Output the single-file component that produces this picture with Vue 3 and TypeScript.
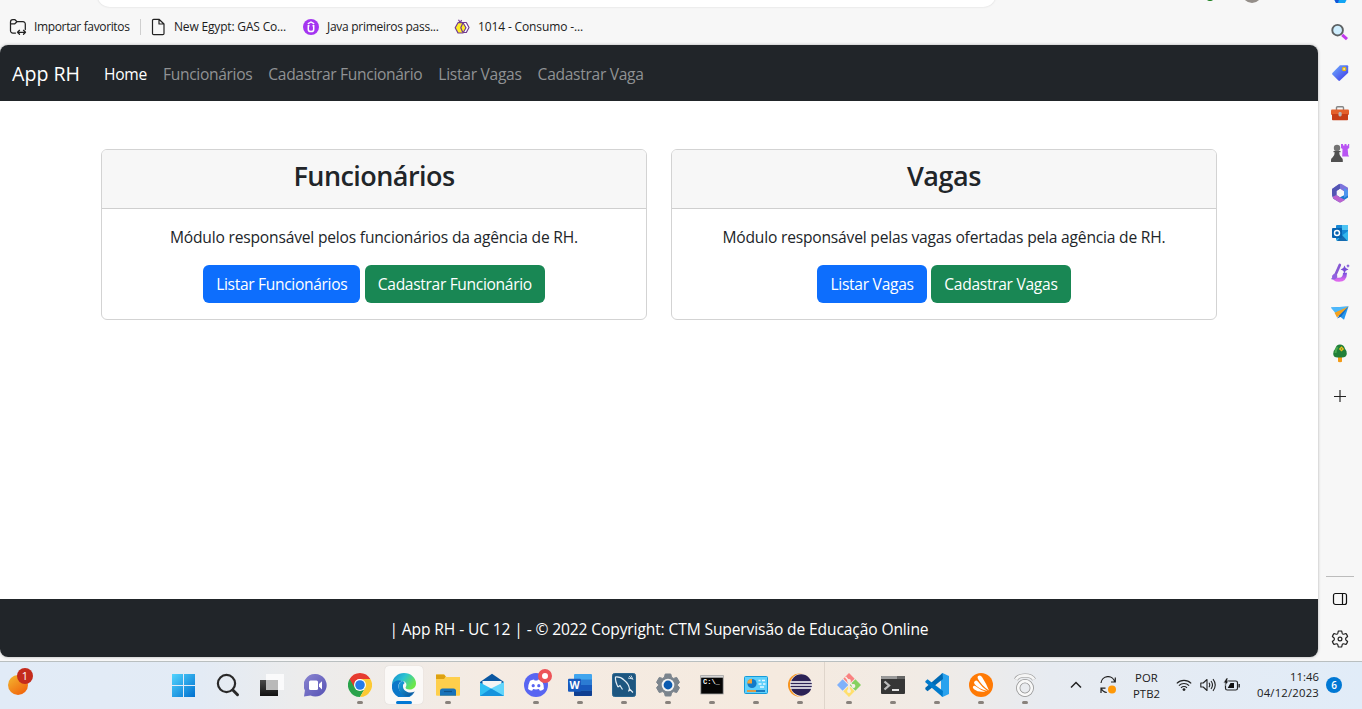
<script setup lang="ts">
interface NavLink { label: string; width: number; active?: boolean }
interface Action { label: string; width: number; kind: 'primary' | 'success' }
interface ModuleCard { title: string; titleWidth: number; text: string; textWidth: number; actions: Action[] }

const links: NavLink[] = [
  { label: 'Home', width: 43, active: true },
  { label: 'Funcionários', width: 89.3 },
  { label: 'Cadastrar Funcionário', width: 154 },
  { label: 'Listar Vagas', width: 83.3 },
  { label: 'Cadastrar Vaga', width: 106 },
]

const cards: ModuleCard[] = [
  {
    title: 'Funcionários',
    titleWidth: 161,
    text: 'Módulo responsável pelos funcionários da agência de RH.',
    textWidth: 408,
    actions: [
      { label: 'Listar Funcionários', width: 131.2, kind: 'primary' },
      { label: 'Cadastrar Funcionário', width: 154, kind: 'success' },
    ],
  },
  {
    title: 'Vagas',
    titleWidth: 74,
    text: 'Módulo responsável pelas vagas ofertadas pela agência de RH.',
    textWidth: 443,
    actions: [
      { label: 'Listar Vagas', width: 83.3, kind: 'primary' },
      { label: 'Cadastrar Vagas', width: 113.3, kind: 'success' },
    ],
  },
]

// Spreads the letters of a label so that it spans the given width.
const vFit = {
  mounted(el: HTMLElement, binding: { value: number }) {
    const natural = el.getBoundingClientRect().width
    const count = (el.textContent ?? '').length
    if (count > 0) el.style.letterSpacing = `${(binding.value - natural) / count}px`
  },
}
</script>

<template>
  <div class="screen">
    <div class="browser">
      <div class="main">
        <div class="address">
          <div class="omnibox"></div>
          <span class="ext"></span>
          <span class="avatar"></span>
        </div>
        <div class="bookmarks">
          <div class="bm import">
            <svg width="18" height="18" viewBox="0 0 18 18" fill="none" stroke="#222" stroke-width="1.25" stroke-linecap="round" stroke-linejoin="round">
              <path d="M6.5 15H3.8A2.3 2.3 0 0 1 1.500 12.700V4A2.300 2.300 0 0 1 3.800 1.700H6l2 2h6A2.300 2.300 0 0 1 16.300 6v5.500M1.500 5.800h4.300L8 3.700" />
              <path d="M8.500 14.300h8M10.500 12.300l-2 2 2 2M14.500 12.300l2 2-2 2" />
            </svg>
            <span v-fit="95.500" class="t">Importar favoritos</span>
          </div>
          <span class="bm-sep"></span>
          <div class="bm page">
            <svg width="14" height="18" viewBox="0 0 14 18" fill="none" stroke="#222" stroke-width="1.200" stroke-linejoin="round">
              <path d="M1.500 2.500A1.200 1.200 0 0 1 2.700 1.300H8L13 6v9.500a1.200 1.200 0 0 1-1.200 1.200H2.700A1.200 1.200 0 0 1 1.500 15.500zM8 1.500V6h4.800" />
            </svg>
            <span v-fit="112" class="t">New Egypt: GAS Co...</span>
          </div>
          <div class="bm java">
            <svg width="16" height="16" viewBox="0 0 16 16">
              <circle cx="8" cy="8" r="8" fill="#a435f0" />
              <path d="M4.800 4.900 8 3l3.200 1.900" fill="none" stroke="#fff" stroke-width="1.300" />
              <path d="M4.600 6.800h1.900M9.500 6.800h1.200v3.600q0 2.100-2.700 2.100t-2.700-2.100V6.800" fill="none" stroke="#fff" stroke-width="1.500" />
            </svg>
            <span v-fit="111.500" class="t">Java primeiros pass...</span>
          </div>
          <div class="bm bee">
            <svg width="16" height="16" viewBox="0 0 16 16" stroke="#713a92" stroke-width="1.200" stroke-linejoin="round">
              <path d="M9 3.500h3.300L15 8.500l-2.700 5H8.500" fill="#fff" />
              <path d="M4 3.700h5L12 8.700l-3 5.300H4L1.200 8.700z" fill="#ffee27" />
              <path d="M8.800 4 6.800 8.700l2 4.800M4.500.8 6 3.300M7.500 1 6.500 3.500" fill="none" />
            </svg>
            <span v-fit="105" class="t">1014 - Consumo -...</span>
          </div>
        </div>

        <div class="page-frame">
          <nav class="navbar">
            <span v-fit="68" class="brand">App RH</span>
            <a v-for="link in links" :key="link.label" :class="['nav-link', { active: link.active }]">
              <span v-fit="link.width" class="t">{{ link.label }}</span>
            </a>
          </nav>
          <main class="content">
            <section v-for="card in cards" :key="card.title" class="card">
              <header class="card-header">
                <h2><span v-fit="card.titleWidth" class="t">{{ card.title }}</span></h2>
              </header>
              <div class="card-body">
                <p><span v-fit="card.textWidth" class="t">{{ card.text }}</span></p>
                <div class="actions">
                  <button v-for="a in card.actions" :key="a.label" :class="['btn', a.kind]">
                    <span v-fit="a.width" class="t">{{ a.label }}</span>
                  </button>
                </div>
              </div>
            </section>
          </main>
          <footer class="footer">
            <span v-fit="539" class="t">| App RH - UC 12 | - © 2022 Copyright: CTM Supervisão de Educação Online</span>
          </footer>
        </div>
      </div>

      <aside class="sidebar">
        <div class="slot">
          <svg width="20" height="20" viewBox="0 0 20 20"><path d="M4 10h16l-2 4-3 6H6l-2-4z" fill="#12a5f4" /><path d="M4 10h7l-3 10H6l-2-4z" fill="#1455d8" /></svg>
        </div>
        <div class="slot">
          <svg width="20" height="20" viewBox="0 0 20 20">
            <path d="m12.200 11.800 4.800 4.400" stroke="#c239ee" stroke-width="3" />
            <circle cx="7.600" cy="7.200" r="5.300" fill="#cfeefe" stroke="#5c6062" stroke-width="1.900" />
          </svg>
        </div>
        <div class="slot">
          <svg width="20" height="20" viewBox="0 0 20 20">
            <defs><linearGradient id="tag" x1="0" y1="0" x2="1" y2="1"><stop offset="0" stop-color="#72b3ff" /><stop offset="1" stop-color="#3b32e5" /></linearGradient></defs>
            <path d="M10 2.200h7.200q1 0 1 1v6.600L10 17.600q-.8.700-1.600 0L2.400 11.500q-.7-.8 0-1.600z" fill="url(#tag)" />
            <circle cx="14.200" cy="6" r="1.700" fill="#e8ddc0" stroke="#e3b80b" stroke-width="1.200" />
          </svg>
        </div>
        <div class="slot">
          <svg width="20" height="20" viewBox="0 0 20 20">
            <path d="M6.500 7V4.800q0-1 1-1h5q1 0 1 1V7" fill="none" stroke="#858585" stroke-width="1.400" />
            <rect x="1" y="6.500" width="18" height="5.500" rx="1" fill="#e4602b" />
            <path d="M2 11h16v5.500q0 .8-.8.800H2.800q-.8 0-.8-.800z" fill="#c63e17" />
            <rect x="8.500" y="9" width="3.200" height="4.500" rx="1.400" fill="#b9b9b9" />
          </svg>
        </div>
        <div class="slot">
          <svg width="20" height="20" viewBox="0 0 20 20">
            <path d="M11 1h2v1.500h1.500V1h2v1.500H18V1h1.200v4l-1.500 1 .5 6 1 1.500h-7L12.500 6 11 5z" fill="#b955f3" />
            <circle cx="7" cy="5" r="3.200" fill="#737373" />
            <path d="M3.500 8h7v1.300H9.200q0 3.200 2 5 1.600 1 1.600 2.500V19H1v-2.200q0-1.500 1.700-2.500 2-1.800 2-5H3.500z" fill="#505050" />
          </svg>
        </div>
        <div class="slot">
          <svg width="20" height="20" viewBox="0 0 20 20">
            <path d="M9 1q2-.8 4 .8l5 3v6l-5-3-3-2-3.500 2.200v5L2 11V6z" fill="#7d74dc" />
            <path d="M2 6 8.500 1.500Q10 .7 10 2v3.800L6.500 8v5L3 15q-1.300-1.500-1-4z" fill="#5355b3" />
            <path d="M3 13.500 6.500 12l3.500 2.300 4-2.100V8l4 2v4.500L11 19q-1 .5-2 0L3 15.600z" fill="#1b79d0" />
            <path d="M3 13.500 6.500 12l3.500 2.300L15 17l-4 2.200q-1 .4-2 0l-6-3.700z" fill="#bb63cf" />
            <path d="m14 5 4 2.500v5L14 15z" fill="#4e95ee" /><path d="m10 6.300 3.500 2v3.600L10 13.800l-3-2V8.200z" fill="#f7f7f7" />
          </svg>
        </div>
        <div class="slot">
          <svg width="20" height="20" viewBox="0 0 20 20">
            <rect x="6" y="2" width="12" height="15" rx="1" fill="#1688d5" /><path d="M12 2h6v5h-6z" fill="#4ec4f3" /><path d="m6 17 12-9v9.300q0 .7-.8.700H7z" fill="#34b7ee" /><path d="M7 18h10.500L12 12z" fill="#156bb0" />
            <rect x="2" y="5" width="10" height="10" rx="1" fill="#0763b0" /><circle cx="7" cy="10" r="2.500" fill="none" stroke="#fff" stroke-width="1.400" />
          </svg>
        </div>
        <div class="slot">
          <svg width="20" height="20" viewBox="0 0 20 20">
            <defs><linearGradient id="brush" x1="0" y1="0" x2="0" y2="1"><stop offset="0" stop-color="#7450dd" /><stop offset="1" stop-color="#dc68ed" /></linearGradient></defs>
            <path d="M4 12.500q0 4.300 5 4.300 6 0 6-7" fill="none" stroke="url(#brush)" stroke-width="4" />
            <path d="M9.800 2 5.800 11" stroke="#8758d4" stroke-width="2.700" stroke-linecap="round" />
            <path d="M5.500 10.500q3 2 1 4.500Q4.500 17.500 1 16q1.500-1 1.500-3.200 1-2.500 3-2.300" fill="#9062df" />
            <path d="m14.500 2.500 1.200 2.600L18.500 6.500l-2.800 1.300L14.500 10.500l-1.200-2.700L10.600 6.500l2.700-1.400zM18 1l.6 1.300 1.300.6-1.300.6L18 4.900l-.6-1.400-1.300-.6 1.300-.6z" fill="#774bd5" />
          </svg>
        </div>
        <div class="slot">
          <svg width="20" height="20" viewBox="0 0 20 20">
            <path d="M1 4.500 18.500 3.500 14 16.800 7.500 11.500z" fill="#2497ef" /><path d="m18.500 3.500-12 8L1 4.500z" fill="#4cb8fb" /><path d="m18.500 3.500-14 6.200L7 14.500l2.500-2.300z" fill="#f2a220" /><path d="m18.500 3.500-9 8.700L7 15.500l4-1.700z" fill="#1a69bd" />
          </svg>
        </div>
        <div class="slot">
          <svg width="20" height="20" viewBox="0 0 20 20">
            <path d="M8 12.500h4v6q0 .8-2 .8t-2-.8z" fill="#f39b18" /><path d="M10 1.500q3.700 0 5 4.200 2.200 2.200 1.800 5.300Q16.200 14.500 12 14.500H7.500q-4 0-4.300-3.500-.2-3 2-5.200Q6.300 1.500 10 1.500" fill="#218039" /><path d="M7.500 4Q5.500 7 5.500 10" stroke="#47a84f" stroke-width="2" fill="none" />
            <path d="m11.500 3.300 2.600 2.600-2.600 2.600-2.600-2.600z" fill="#f0bd1b" /><circle cx="11.500" cy="5.900" r=".7" fill="#368538" />
          </svg>
        </div>
        <div class="slot plus">
          <svg width="14" height="14" viewBox="0 0 14 14"><path d="M7 1v12M1 7.500h12" stroke="#222" stroke-width="1.150" /></svg>
        </div>
        <div class="side-bottom">
          <span class="side-rule"></span>
          <svg class="panel" width="16" height="14" viewBox="0 0 16 14" fill="none" stroke="#111" stroke-width="1.200"><rect x="1.500" y="1.500" width="13" height="11" rx="2" /><path d="M10.500 1.500v11" /></svg>
          <svg class="gear" width="18" height="18" viewBox="0 0 18 18" fill="none" stroke="#222" stroke-width="1.200" stroke-linejoin="round">
            <path d="M7.300 1.200q1.700-.4 3.400 0l.5 2.200q.4 1 1.500.8l2.200-.7q1.200 1.300 1.700 3L14.900 8q-.7 1 0 2l1.700 1.500q-.5 1.700-1.700 3l-2.200-.7q-1.100-.2-1.500.8l-.5 2.200q-1.700.4-3.400 0l-.5-2.200q-.4-1-1.500-.8l-2.200.7q-1.200-1.300-1.700-3L3.100 10q.7-1 0-2L1.400 6.500q.5-1.700 1.700-3l2.200.7q1.100.2 1.500-.8z" /><circle cx="9" cy="9" r="1.900" />
          </svg>
        </div>
      </aside>
    </div>

    <div class="taskbar">
      <div class="widget">
        <svg width="28" height="32" viewBox="0 0 28 32">
          <defs><linearGradient id="sun" x1="0" y1="0" x2=".7" y2="1"><stop offset="0" stop-color="#f3bb32" /><stop offset="1" stop-color="#f1650c" /></linearGradient></defs>
          <circle cx="11" cy="20" r="10" fill="url(#sun)" /><circle cx="18" cy="11" r="8" fill="#c42b1c" />
        </svg>
        <span class="count">1</span>
      </div>

      <div class="apps">
        <div class="app">
          <svg width="24" height="24" viewBox="0 0 24 24">
            <defs><linearGradient id="win" x1="0" y1="0" x2="1" y2="1"><stop offset="0" stop-color="#52d4fe" /><stop offset="1" stop-color="#0070cf" /></linearGradient></defs>
            <path d="M0 1h11v11H0zM12 1h11v11H12zM0 13h11v11H0zM12 13h11v11H12z" fill="url(#win)" />
          </svg>
        </div>
        <div class="app">
          <svg width="24" height="24" viewBox="0 0 24 24" fill="none" stroke="#292929"><circle cx="10.500" cy="10.500" r="8.600" stroke-width="2.200" /><path d="m16.800 17 4.700 4.700" stroke-width="3" stroke-linecap="round" /></svg>
        </div>
        <div class="app">
          <svg width="26" height="24" viewBox="0 0 26 24">
            <defs><linearGradient id="tv" x1="0" y1="0" x2="0" y2="1"><stop offset="0" stop-color="#484848" /><stop offset="1" stop-color="#111" /></linearGradient></defs>
            <path d="M1 7h18v16H1z" fill="url(#tv)" /><path d="M7 1h18v16H7z" fill="#fff" opacity=".75" /><path d="M7 7h12v10H7z" fill="#b9b9b9" />
          </svg>
        </div>
        <div class="app">
          <svg width="24" height="24" viewBox="0 0 24 24">
            <defs><linearGradient id="chat" x1="0" y1="0" x2="1" y2="1"><stop offset="0" stop-color="#8b86d1" /><stop offset="1" stop-color="#5551b4" /></linearGradient></defs>
            <path d="M11.500 1a11.300 11.300 0 1 1-5 21.500L0 23.500l.9-6A11.300 11.300 0 0 1 11.500 1" fill="url(#chat)" />
            <rect x="5" y="7.500" width="9" height="9.500" rx="1.500" fill="#fff" /><path d="m15 11 3-2.800v8.200l-3-2.800z" fill="#fff" />
          </svg>
        </div>
        <div class="app open">
          <svg width="24" height="24" viewBox="0 0 24 24">
            <circle cx="12" cy="12" r="12" fill="#fff" />
            <path d="M12 12 1.600 6A12 12 0 0 0 12 24l5.200-9z" fill="#2aa34b" /><path d="M12 6h10.400A12 12 0 0 1 12 24l5.200-9z" fill="#fcc934" /><path d="M12 0A12 12 0 0 1 22.400 6H12a6 6 0 0 0-5.200 9L1.600 6A12 12 0 0 1 12 0" fill="#e63b30" />
            <circle cx="12" cy="12" r="6" fill="#fff" /><circle cx="12" cy="12" r="4.800" fill="#267be9" />
          </svg>
        </div>
        <div class="app open current">
          <svg width="24" height="24" viewBox="0 0 24 24">
            <defs>
              <linearGradient id="edgeTop" x1="0" y1="0" x2="1" y2=".5"><stop offset="0" stop-color="#1689cf" /><stop offset=".5" stop-color="#2bc3d2" /><stop offset="1" stop-color="#6be64a" /></linearGradient>
              <linearGradient id="edgeLow" x1="0" y1="0" x2="1" y2="1"><stop offset="0" stop-color="#1ba6e4" /><stop offset="1" stop-color="#0b4d91" /></linearGradient>
            </defs>
            <path d="M0 11.500C.5 4.500 5.700 0 12 0c7 0 12 5 12 10.200 0 4-3 6.300-6.500 6.300-3 0-4.500-1.200-3.800-2.300 1.500-2.300.8-5.500-3-6.200C6 7 2 8.500 0 11.500" fill="url(#edgeTop)" />
            <path d="M0 11.500C2 7.500 7 6.500 10.500 8 7.500 8.500 6 11.500 6.500 14.500c.7 4.500 5 7.500 9 7.500 3 0 5.500-1.500 7.200-3.500A12 12 0 0 1 0 11.500" fill="#0b78c9" />
            <path d="M10.500 8C7 9 5.700 13 7.200 17c1.500 4 5 6.700 8.500 6.300 3-.6 5.300-2.300 7-4.800-5.500 2.700-12.500-.5-11.700-6.300.2-1 .9-1.700 1.600-2-.2-1-.9-1.800-2.100-2.200" fill="url(#edgeLow)" />
          </svg>
        </div>
        <div class="app open">
          <svg width="24" height="24" viewBox="0 0 24 24">
            <path d="M0 2.300Q0 1.500 1 1.500h7l2.500 2.500H23q1 0 1 1v17H0z" fill="#ffd45b" /><path d="M0 1.500h8.200l1.500 2L8.200 6H0z" fill="#dda111" /><path d="M0 6h8.500L10.500 4H24v18q0 .7-1 .7H1q-1 0-1-.700z" fill="#fecf4c" /><path d="M4 22.700V18q0-2.500 2.500-2.500h11Q20 15.500 20 18v4.700z" fill="#1772b9" /><path d="M8 18.500h8" stroke="#0d528a" stroke-width="1.200" />
          </svg>
        </div>
        <div class="app">
          <svg width="24" height="24" viewBox="0 0 24 24">
            <path d="M0 9 12 .8 24 9v14H0z" fill="#0b57a1" /><path d="M2.500 8h19v10h-19z" fill="#f4f4f4" /><path d="M0 9.500 12 16l12-6.500V23H0z" fill="#31bff3" /><path d="m24 23-13-7.500L24 9z" fill="#62d5fb" /><path d="m0 23 11-7.500L24 23z" fill="#1593dd" />
          </svg>
        </div>
        <div class="app open discord">
          <svg width="24" height="24" viewBox="0 0 24 24">
            <circle cx="12" cy="12" r="12" fill="#5865f2" /><path d="M6 7.700Q8 6.500 10 6.400l.6 1.200q1.400-.2 2.800 0l.6-1.200q2 .1 4 1.300 2 4 1.900 8.300-1.700 1.400-4 1.800l-1-1.700q-2.900.7-5.800 0l-1 1.700q-2.300-.4-4-1.800Q4 11.700 6 7.700" fill="#fff" /><circle cx="9.200" cy="12.700" r="1.600" fill="#5865f2" /><circle cx="14.800" cy="12.700" r="1.600" fill="#5865f2" />
          </svg>
          <span class="dot"></span>
        </div>
        <div class="app open">
          <div class="word">
            <svg width="24" height="24" viewBox="0 0 24 24"><rect x="6" y="1" width="18" height="22" rx="1" fill="#41a5ee" /><path d="M6 6.500h18V12H6z" fill="#2b7cd3" /><path d="M6 12h18v5.500H6z" fill="#185abd" /><path d="M6 17.500h18V22q0 1-1 1H7q-1 0-1-1z" fill="#103f91" /><rect y="5.800" width="13" height="13" rx="1" fill="#185abd" /></svg>
            <span>W</span>
          </div>
        </div>
        <div class="app open">
          <svg width="24" height="24" viewBox="0 0 24 24">
            <rect x=".5" y=".5" width="23" height="23" rx="2" fill="#1d5680" stroke="#2b6790" />
            <path d="M6 14Q3 8 3.500 4q5-.5 8.500 3 5 4 5.500 9l3.500 3.500M6 14l2-1.500 2.500 4M17.500 16l-1 2.500" fill="none" stroke="#e3edf4" stroke-width="1.200" /><path d="m17 3 3 3M19 2.500l2 4M16 5l5 1" stroke="#c5d6e2" stroke-width="1" />
          </svg>
        </div>
        <div class="app open">
          <svg width="24" height="24" viewBox="0 0 24 24">
            <path d="M9.200 1h5.600l.8 3.300 1.900 1.100 3.200-1 2.800 4.900L21.200 12l2.300 2.700-2.800 4.900-3.200-1-1.900 1.100-.8 3.300H9.200l-.8-3.300-1.900-1.100-3.200 1L.5 14.700 2.800 12 .5 9.300l2.800-4.900 3.200 1 1.900-1.100z" fill="#7b848d" stroke="#7b848d" stroke-linejoin="round" /><circle cx="12" cy="12" r="6.300" fill="#f2f2f2" /><circle cx="12" cy="12" r="4.400" fill="#0b5ab0" />
          </svg>
        </div>
        <div class="app open">
          <div class="cmd">
            <svg width="24" height="24" viewBox="0 0 24 24"><rect x=".8" y="2.500" width="22.400" height="18.500" fill="#050505" stroke="#aaa" stroke-width=".8" /><path d="M1 2.700h22v2H1z" fill="#d5d5d5" /></svg>
            <span>C:\_</span>
          </div>
        </div>
        <div class="app open">
          <svg width="24" height="24" viewBox="0 0 24 24">
            <rect x=".5" y="3.500" width="23" height="17" rx="1" fill="#60d0fb" stroke="#159bd9" /><circle cx="8" cy="10.500" r="4.600" fill="#137ac8" /><path d="M8 10.500V5.700a4.800 4.800 0 0 0-4.800 4.800z" fill="#f8a333" /><path d="M14.500 7.500h2M18 7.500h3M14.500 11h3M19 11h2.500M16 14h4" stroke="#e8f8ff" stroke-width="1.500" /><path d="M3 18h9" stroke="#f09329" stroke-width="1.700" /><path d="M12 18h9" stroke="#0d6db4" stroke-width="1.700" />
          </svg>
        </div>
        <div class="app open">
          <svg width="24" height="24" viewBox="0 0 24 24"><circle cx="11.500" cy="12" r="11.500" fill="#f7941e" /><circle cx="13.500" cy="12" r="11.500" fill="#f5eadf" /><circle cx="13.200" cy="12" r="10.700" fill="#2c2255" /><path d="M2.500 9h21.500M2 12h22M2.500 15h21.500" stroke="#fff" stroke-width="1.400" /></svg>
        </div>
        <span class="task-sep"></span>
        <div class="app open">
          <svg width="24" height="24" viewBox="0 0 24 24">
            <g transform="rotate(45 12 12)"><path d="M3.500 3.500h8v8h-8z" fill="#f98280" /><path d="M12.500 3.500h8v8h-8z" fill="#85d15f" /><path d="M3.500 12.500h8v8h-8z" fill="#80b1fa" /><path d="M12.500 12.500h8v8h-8z" fill="#ffdf6d" /></g>
            <path d="m8.500 4 3.500 4v10M12 9l4.500 4" stroke="#f5efe7" stroke-width="1.600" fill="none" /><circle cx="12" cy="8" r="1.900" fill="#f5efe7" /><circle cx="12" cy="18" r="1.900" fill="#f5efe7" /><circle cx="16.500" cy="13" r="1.900" fill="#f5efe7" />
          </svg>
        </div>
        <div class="app open">
          <svg width="24" height="24" viewBox="0 0 24 24"><rect y="3" width="24" height="18" rx="1" fill="#363636" /><path d="M0 4q0-1 1-1h15v3H0z" fill="#9a9a9a" /><path d="M16 3h7q1 0 1 1v2h-8z" fill="#666" /><path d="m3.500 8.500 4.500 4-4.500 4" fill="none" stroke="#bbb" stroke-width="2.300" /><path d="M11 17h7" stroke="#eee" stroke-width="1.900" /></svg>
        </div>
        <div class="app open">
          <svg width="24" height="24" viewBox="0 0 24 24"><path d="M17.500 0 24 3v18l-6.500 3-1.500-1.500v-21z" fill="#29a2ee" /><path d="M17.500 0 18 6 2.500 18.200.3 16.200v-1.400z" fill="#0069b3" /><path d="m.3 8.200 2.200-2L18 18l-.5 6L.3 9.300z" fill="#007acc" /></svg>
        </div>
        <div class="app open">
          <svg width="24" height="24" viewBox="0 0 24 24"><circle cx="12" cy="12" r="12" fill="#ff7a05" /><path d="M9 3q2.500-1.500 4 1 4.500 7 7 13.500-7-4.500-11-11.500-1-2 0-3M6 8q1.500-1 2.800.5 4 5.500 9.700 9.500Q9.500 16 5.500 11 4.300 9 6 8M4.500 13q1.200-.7 2.500.5 4.500 3.700 9.500 5-7.500 1-11.500-2.300-2-2-.5-3.200" fill="#fff" /></svg>
        </div>
        <div class="app open">
          <svg width="24" height="24" viewBox="0 0 24 24" fill="none"><path d="M3 6.500Q5 2.500 12 2.500t9 4" stroke="#989898" stroke-width="4.200" /><path d="M3 6.500Q5 2.500 12 2.500t9 4" stroke="#f5f5f5" stroke-width="2.800" /><circle cx="12" cy="15" r="6.800" stroke="#909090" stroke-width="4.200" /><circle cx="12" cy="15" r="6.800" stroke="#f8f8f8" stroke-width="2.700" /></svg>
        </div>
      </div>

      <div class="tray">
        <svg class="chevron" width="12" height="8" viewBox="0 0 12 8"><path d="m1 6.500 5-5 5 5" fill="none" stroke="#222" stroke-width="1.500" /></svg>
        <svg class="sync" width="18" height="18" viewBox="0 0 18 18" fill="none" stroke="#222" stroke-width="1.200"><path d="M2 7a7 7 0 0 1 13.800-1M16.300 1.500V6H12M2 17v-4.800h4.500M2.300 12.500a7 7 0 0 0 5.500 4" /><circle cx="13" cy="13.500" r="4" fill="#ff9908" stroke="none" /></svg>
        <div class="lang"><span v-fit="23" class="t">POR</span><span v-fit="27" class="t">PTB2</span></div>
        <svg class="wifi" width="16" height="14" viewBox="0 0 16 14" fill="none" stroke="#222" stroke-width="1.150"><path d="M.8 5.300a10.200 10.200 0 0 1 14.400 0M2.900 7.600a7.200 7.200 0 0 1 10.200 0M5 9.800a4.200 4.200 0 0 1 6 0" /><circle cx="8" cy="11.600" r="1.400" fill="#222" stroke="none" /></svg>
        <svg class="volume" width="16" height="14" viewBox="0 0 16 14" fill="none" stroke="#222" stroke-width="1.100" stroke-linejoin="round"><path d="M.8 5h2.400L7 1.500v11L3.200 9H.800zM9 4.800q1.500 2.200 0 4.400M11 3q3 4 0 8M13 1.200q4.500 5.800 0 11.600" /></svg>
        <svg class="battery" width="18" height="14" viewBox="0 0 18 14"><rect x="2.500" y="3" width="12" height="9" rx="1.800" fill="none" stroke="#222" stroke-width="1.200" /><path d="M7.500 5H11v5H4.700zM15.500 6h1.300v3.500h-1.300z" fill="#111" /><path d="M3.500 0 .5 4.800h2L1.700 8l4-4.700H4L5 0z" fill="#111" stroke="#e5edf5" stroke-width=".5" /></svg>
        <div class="clock"><span v-fit="29" class="t">11:46</span><span v-fit="62" class="t">04/12/2023</span></div>
        <span class="notif">6</span>
      </div>
    </div>
  </div>
</template>

<style>
body { margin: 0; overflow: hidden; }
</style>

<style scoped>
.screen { width: 1362px; height: 709px; display: flex; flex-direction: column; overflow: hidden; background: #f7f7f7; font-family: "Open Sans", "Noto Sans", sans-serif; color: #212529; }
.screen svg { display: block; flex: none; }
.t { display: inline-block; white-space: nowrap; }
.browser { height: 661px; display: flex; }
.main { width: 1318px; display: flex; flex-direction: column; }
.address { height: 10px; display: flex; align-items: flex-start; }
.omnibox { width: 899px; height: 27px; margin: -20px 0 0 97px; border-radius: 13px; background: #fff; box-shadow: 0 0 2px #d0d0d0; }
.ext { width: 8px; height: 8px; margin: -7px 0 0 210px; border-radius: 4px; background: #157c18; }
.avatar { width: 20px; height: 20px; margin: -17px 0 0 28px; border-radius: 10px; background: #948e89; }
.bookmarks { height: 34px; padding-bottom: 1px; display: flex; align-items: center; font-size: 12px; color: #1b1b1b; }
.bm { display: flex; align-items: center; height: 20px; line-height: 20px; }
.import { width: 121px; margin-left: 9px; gap: 7px; }
.bm-sep { width: 1px; height: 16px; margin: 0 10px; background: #cfcfcf; }
.page { width: 152px; gap: 9px; }
.java { width: 151px; gap: 8px; }
.bee { gap: 8px; }
.page-frame { height: 612px; display: flex; flex-direction: column; overflow: hidden; border-radius: 8px; background: #fff; box-shadow: 0 0 3px #aaa; }
.navbar { height: 56px; flex: none; display: flex; align-items: center; box-sizing: border-box; padding: 1px 0 0 12px; background: #212529; color: #fff; }
.brand { display: inline-block; margin-right: 16px; font-size: 19.600px; line-height: 30px; white-space: nowrap; }
.nav-link { padding: 0 8px; font-size: 15.600px; line-height: 24px; color: #909294; }
.nav-link.active { color: #fff; }
.content { flex: 1; display: flex; align-items: flex-start; gap: 24px; padding: 48px 101px 0; }
.card { width: 546px; box-sizing: border-box; height: 171px; overflow: hidden; border: 1px solid #d3d3d3; border-radius: 6px; background: #fff; text-align: center; }
.card-header { padding-top: 8px; height: 50px; border-bottom: 1px solid #cfcfcf; background: #f7f7f7; }
h2 { margin: 0; font-size: 27px; line-height: 36px; font-weight: 600; }
.card-body { padding: 16px; font-size: 15.600px; line-height: 24px; }
p { margin: 0 0 16px; }
.actions { display: flex; justify-content: center; gap: 4.500px; }
.btn { height: 38px; padding: 0 13px; border: 0; border-radius: 6px; color: #fff; font: inherit; line-height: 24px; }
.primary { background: #0d6efd; }
.success { background: #198754; }
.footer { height: 58px; flex: none; display: flex; align-items: center; justify-content: center; box-sizing: border-box; padding: 2px 0 0; background: #212529; color: #fff; font-size: 15.600px; }
.sidebar { width: 44px; display: flex; flex-direction: column; align-items: center; overflow: hidden; }
.slot { width: 44px; height: 40px; flex: none; display: flex; align-items: center; justify-content: center; }
.slot:first-child { margin-top: -27px; }
.slot.plus { height: 46px; }
.side-bottom { margin-top: auto; width: 44px; height: 85px; display: flex; flex-direction: column; align-items: center; }
.side-rule { width: 28px; height: 1px; flex: none; background: #bcbcbc; }
.panel { margin-top: 15px; }
.gear { margin-top: 24px; }
.taskbar { height: 48px; box-sizing: border-box; display: flex; align-items: flex-start; border-top: 1px solid #b9bfc0; background: linear-gradient(90deg, #e1ebf7 0, #e3ebf5 200px, #ececec 300px, #f4ebe3 480px, #f5eadf 780px, #f1ebe5 920px, #e7ebf1 1050px, #e1ecf8 1362px); }
.widget { position: relative; width: 155px; height: 32px; padding-left: 7px; margin-top: 3px; }
.count { position: absolute; left: 17px; top: 3px; width: 16px; line-height: 16px; text-align: center; color: #fff; font-size: 11px; }
.apps { display: flex; align-items: center; width: 885px; height: 46px; }
.app { position: relative; width: 44px; height: 38px; display: flex; align-items: center; justify-content: center; }
.app.open::after { content: ""; position: absolute; left: 19px; top: 35px; width: 6px; height: 3px; border-radius: 1.500px; background: #88827c; }
.app.current::before { content: ""; position: absolute; inset: 0 3px; border-radius: 4px; background: #fbf9f7; box-shadow: 0 0 1px #c8c4c0; }
.app.current svg { position: relative; }
.app.current::after { left: 14px; width: 16px; background: #0078d4; }
.dot { position: absolute; right: 6px; top: 3px; width: 6px; height: 6px; border: 4px solid #ed5358; border-radius: 50%; background: #fff; }
.word, .cmd { position: relative; width: 24px; height: 24px; }
.word span { position: absolute; left: 0; top: 6px; width: 13px; text-align: center; color: #fff; font-size: 10.500px; line-height: 13px; font-weight: 700; }
.cmd span { position: absolute; left: 3px; top: 5px; color: #fff; font: 700 7px/8px "Liberation Mono", monospace; }
.task-sep { width: 1px; height: 47px; margin: 0 2px; background: #dfd5cb; }
.tray { display: flex; align-items: center; flex: 1; height: 46px; color: #202020; font-size: 11.300px; line-height: 16px; }
.chevron { margin-left: 23px; }
.sync { margin-left: 17px; }
.lang { width: 37px; margin: 1px 0 0 11px; display: flex; flex-direction: column; align-items: center; }
.wifi { margin-left: 11px; }
.volume { margin-left: 8px; }
.battery { margin-left: 7px; }
.clock { width: 70px; margin-left: 8px; display: flex; flex-direction: column; align-items: flex-end; }
.notif { width: 16px; height: 16px; margin-left: 7px; border-radius: 8px; background: #0078d4; color: #fff; text-align: center; font-size: 10px; font-weight: 600; }
</style>
